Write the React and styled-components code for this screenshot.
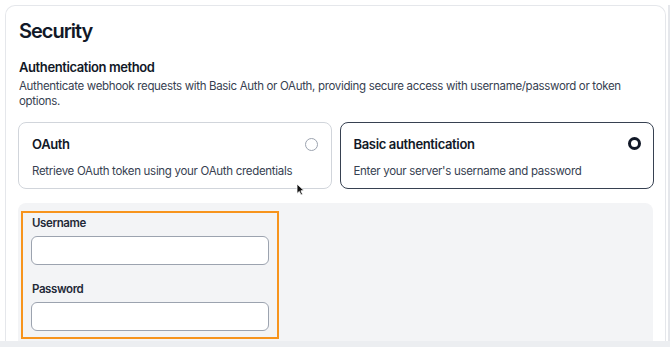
import React from "react";
import styled, { createGlobalStyle } from "styled-components";

const Global = createGlobalStyle`
  html, body { margin: 0; padding: 0; background: #ffffff; }
  body { font-family: Inter, "Noto Sans", sans-serif; color: #111827; -webkit-font-smoothing: antialiased; }
  * { box-sizing: border-box; }
`;

const Page = styled.div`
  width: 670px;
  height: 347px;
  overflow: hidden;
  display: flex;
  flex-direction: column;
  background: #ffffff;
`;

const Main = styled.div`
  flex: 1;
  min-height: 0;
  display: flex;
  padding: 5px 0 0 5px;
`;

const Card = styled.section`
  position: relative;
  width: 661px;
  border: 1px solid #e5e7eb;
  border-bottom: none;
  border-radius: 10px 10px 0 0;
  padding: 13px 11px 0 12px;
  display: flex;
  flex-direction: column;
  overflow: hidden;
`;

const Scroll = styled.div`
  width: 2px;
  margin-left: 2px;
  background: #e5e7eb;
`;

const BottomBar = styled.div`
  height: 6px;
  background: #eceef1;
  flex-shrink: 0;
`;

const Title = styled.h1`
  margin: 0 0 0 1px;
  font-size: 20px;
  line-height: 24px;
  font-weight: 600;
  letter-spacing: -1px;
  color: #111827;
`;

const SectionTitle = styled.h2`
  margin: 16px 0 0 1px;
  font-size: 13px;
  line-height: 17px;
  font-weight: 600;
  letter-spacing: -0.4px;
  color: #111827;
`;

const Description = styled.p`
  margin: 3px 0 0 1px;
  font-size: 11.5px;
  line-height: 15px;
  letter-spacing: -0.33px;
  color: #374151;
  max-width: 610px;
`;

const Options = styled.div`
  display: grid;
  grid-template-columns: 314px 314px;
  gap: 8px;
  margin-top: 13px;
`;

const OptionCard = styled.div`
  height: 67px;
  border-radius: 8px;
  border: ${(p) => (p.$selected ? "1.5px solid #374151" : "1px solid #d1d5db")};
  padding: ${(p) => (p.$selected ? "12.5px 12.5px 0 12.5px" : "13px 13px 0 13px")};
  display: flex;
  flex-direction: column;
  gap: 11px;
  background: #fff;
`;

const OptionHead = styled.div`
  display: flex;
  align-items: center;
  justify-content: space-between;
  height: 16px;
`;

const OptionTitle = styled.span`
  font-size: 13px;
  line-height: 16px;
  font-weight: 600;
  letter-spacing: -0.35px;
  color: #111827;
`;

const OptionText = styled.span`
  font-size: 11.5px;
  line-height: 16px;
  letter-spacing: -0.3px;
  color: #374151;
`;

const Radio = styled.span`
  width: 13px;
  height: 13px;
  border-radius: 50%;
  border: ${(p) => (p.$checked ? "3px solid #111827" : "1px solid #9ca3af")};
  background: #fff;
  flex-shrink: 0;
`;

const Panel = styled.div`
  margin-top: 14px;
  width: 635px;
  flex: 1;
  background: #f3f4f6;
  border-radius: 8px 8px 0 0;
  padding: 8px 0 0 3px;
`;

const Highlight = styled.div`
  width: 258px;
  border: 2px solid #f7941d;
  padding: 2px 8px 6px 8px;
  display: flex;
  flex-direction: column;
`;

const Field = styled.label`
  display: flex;
  flex-direction: column;
  gap: 5px;
  margin-top: ${(p) => p.$offset || 0}px;
`;

const Label = styled.span`
  font-size: 11.5px;
  line-height: 16px;
  font-weight: 600;
  letter-spacing: -0.4px;
  color: #1f2937;
  padding-left: 1px;
`;

const Input = styled.input`
  width: 238px;
  height: 29px;
  border: 1px solid #9ca3af;
  border-radius: 6px;
  background: #fff;
  font: inherit;
  outline: none;
`;

const Cursor = styled.svg`
  position: absolute;
  left: 290px;
  top: 177px;
`;

export default function App() {
  return (
    <>
      <Global />
      <Page>
        <Main>
          <Card>
            <Title>Security</Title>
            <SectionTitle>Authentication method</SectionTitle>
            <Description>
              Authenticate webhook requests with Basic Auth or OAuth, providing secure access with username/password or token options.
            </Description>
            <Options>
              <OptionCard>
                <OptionHead>
                  <OptionTitle>OAuth</OptionTitle>
                  <Radio />
                </OptionHead>
                <OptionText>Retrieve OAuth token using your OAuth credentials</OptionText>
              </OptionCard>
              <OptionCard $selected>
                <OptionHead>
                  <OptionTitle>Basic authentication</OptionTitle>
                  <Radio $checked />
                </OptionHead>
                <OptionText>Enter your server's username and password</OptionText>
              </OptionCard>
            </Options>
            <Panel>
              <Highlight>
                <Field>
                  <Label>Username</Label>
                  <Input type="text" />
                </Field>
                <Field $offset={16}>
                  <Label>Password</Label>
                  <Input type="password" />
                </Field>
              </Highlight>
            </Panel>
            <Cursor width="9" height="13" viewBox="0 0 9 13">
              <path d="M1 1 L1 10.5 L3.3 8.4 L5 12 L6.6 11.3 L4.9 7.8 L8 7.6 Z" fill="#111" stroke="#fff" strokeWidth="0.8" strokeLinejoin="round" />
            </Cursor>
          </Card>
          <Scroll />
        </Main>
        <BottomBar />
      </Page>
    </>
  );
}
